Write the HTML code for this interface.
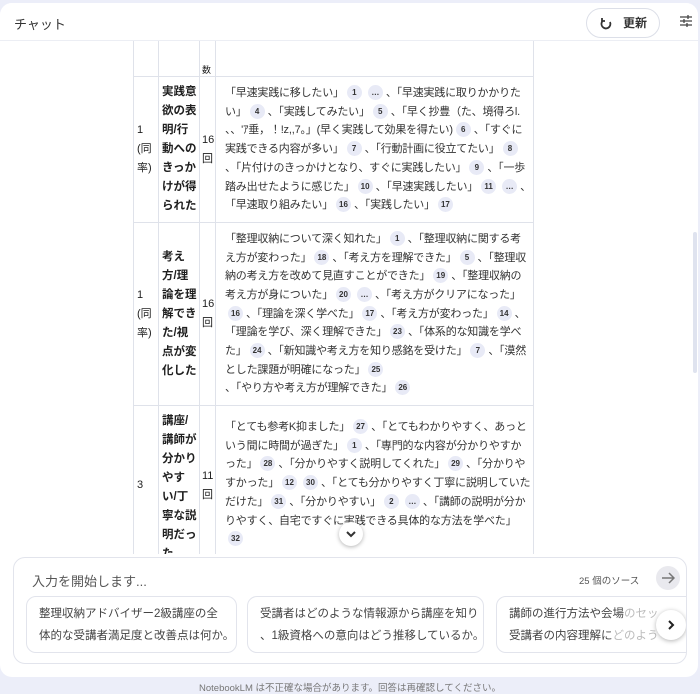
<!DOCTYPE html>
<html><head><meta charset="utf-8"><style>
*{box-sizing:border-box;margin:0;padding:0}
body{width:700px;height:693px;overflow:hidden;background:#eceef9;font-family:"Liberation Sans","Noto Sans CJK JP",sans-serif;color:#1f1f1f;position:relative}
.panel{position:absolute;left:0;top:3px;width:698px;height:674px;background:#fff;border-radius:12px;overflow:hidden}
.hdr{position:absolute;left:0;top:0;width:100%;height:38px;border-bottom:1.5px solid #eceef4}
.hdr .t{position:absolute;left:14px;top:11px;font-size:13px;color:#333}
.btn{position:absolute;left:586px;top:5px;width:74px;height:30px;border:1px solid #dcdfe8;border-radius:16px;font-size:12px;font-weight:bold;color:#333;line-height:28px;padding-left:36px}
.btn svg{position:absolute;left:12px;top:8px}
.tune{position:absolute;left:680px;top:12px}
.clip{position:absolute;left:0;top:0;width:100%;height:551px;overflow:hidden}
table{position:absolute;left:133px;top:20px;border-collapse:collapse;font-size:11px;table-layout:fixed}
td{border:1px solid #dfe2ea;vertical-align:middle;line-height:18.7px}
td.c1{width:25px;padding-left:3px;font-size:11px;line-height:19px}
td.c2{width:41px;padding-left:3px;font-weight:bold;font-size:11.5px;line-height:19px}
td.c3{width:16px;padding-left:2px;font-size:11px}
td.c4{width:318px;padding:4px 2px 4px 9px;color:#333;letter-spacing:-0.2px}
.ch{display:inline-block;min-width:15px;height:15px;line-height:15px;border-radius:8px;background:#e8eaf6;font-size:8px;text-align:center;padding:0 3px;margin:0 3px;vertical-align:1px;color:#333;font-weight:bold;letter-spacing:0}
.down{position:absolute;left:339px;top:519px;width:24px;height:24px;border-radius:50%;background:#fff;box-shadow:0 1px 4px rgba(0,0,0,.3)}
.down svg{position:absolute;left:6px;top:7px}
.inp{position:absolute;left:13px;top:554px;width:674px;height:107px;border:1px solid #e2e4ec;border-radius:12px;background:#fff;overflow:hidden}
.ph{position:absolute;left:18px;top:13px;font-size:13px;color:#555}
.src{position:absolute;left:565px;top:15px;font-size:9.5px;color:#555}
.go{position:absolute;left:642px;top:8px;width:24px;height:24px;border-radius:50%;background:#e9e9ee}
.go svg{position:absolute;left:5px;top:5px}
.card{position:absolute;top:38px;height:57px;border:1px solid #e2e4ec;border-radius:10px;font-size:11.5px;line-height:22px;padding:6px 12px;color:#444;white-space:nowrap;overflow:hidden}
.next{position:absolute;left:642px;top:52px;width:30px;height:30px;border-radius:50%;background:#fff;box-shadow:0 1px 5px rgba(0,0,0,.3)}
.next svg{position:absolute;left:10px;top:9px}
.foot{position:absolute;left:0;top:680px;width:700px;text-align:center;font-size:9.5px;color:#777}
.sb{position:absolute;left:693px;top:229px;width:4px;height:141px;background:#dfe3ef;border-radius:2px}
</style></head><body>
<div class="panel">
<div class="clip">
<table>
<tr style="height:53px"><td class="c1"></td><td class="c2"></td><td class="c3" style="vertical-align:bottom;font-size:9px;line-height:12px">数</td><td class="c4"></td></tr>
<tr style="height:146px"><td class="c1">1<br>(同<br>率)</td><td class="c2">実践意<br>欲の表<br>明/行<br>動への<br>きっか<br>けが得<br>られた</td><td class="c3">16<br>回</td><td class="c4">「早速実践に移したい」<span class="ch">1</span><span class="ch">…</span>、「早速実践に取りかかりたい」<span class="ch">4</span>、「実践してみたい」<span class="ch">5</span>、「早く抄豊（た、境得ろl. 、、'ｱ垂，！!z,,7。」(早く実践して効果を得たい)<span class="ch">6</span>、「すぐに実践できる内容が多い」<span class="ch">7</span>、「行動計画に役立てたい」<span class="ch">8</span>、「片付けのきっかけとなり、すぐに実践したい」<span class="ch">9</span>、「一歩踏み出せたように感じた」<span class="ch">10</span>、「早速実践したい」<span class="ch">11</span><span class="ch">…</span>、「早速取り組みたい」<span class="ch">16</span>、「実践したい」<span class="ch">17</span></td></tr>
<tr style="height:183px"><td class="c1">1<br>(同<br>率)</td><td class="c2">考え<br>方/理<br>論を理<br>解でき<br>た/視<br>点が変<br>化した</td><td class="c3">16<br>回</td><td class="c4">「整理収納について深く知れた」<span class="ch">1</span>、「整理収納に関する考え方が変わった」<span class="ch">18</span>、「考え方を理解できた」<span class="ch">5</span>、「整理収納の考え方を改めて見直すことができた」<span class="ch">19</span>、「整理収納の考え方が身についた」<span class="ch">20</span><span class="ch">…</span>、「考え方がクリアになった」<span class="ch">16</span>、「理論を深く学べた」<span class="ch">17</span>、「考え方が変わった」<span class="ch">14</span>、「理論を学び、深く理解できた」<span class="ch">23</span>、「体系的な知識を学べた」<span class="ch">24</span>、「新知識や考え方を知り感銘を受けた」<span class="ch">7</span>、「漠然とした課題が明確になった」<span class="ch">25</span><br>、「やり方や考え方が理解できた」<span class="ch">26</span></td></tr>
<tr style="height:160px"><td class="c1">3</td><td class="c2" style="vertical-align:top;padding-top:6px">講座/<br>講師が<br>分かり<br>やす<br>い/丁<br>寧な説<br>明だっ<br>た</td><td class="c3">11<br>回</td><td class="c4" style="vertical-align:top;padding-top:12px">「とても参考K抑ました」<span class="ch">27</span>、「とてもわかりやすく、あっという間に時間が過ぎた」<span class="ch">1</span>、「専門的な内容が分かりやすかった」<span class="ch">28</span>、「分かりやすく説明してくれた」<span class="ch">29</span>、「分かりやすかった」<span class="ch">12</span><span class="ch">30</span>、「とても分かりやすく丁寧に説明していただけた」<span class="ch">31</span>、「分かりやすい」<span class="ch">2</span><span class="ch">…</span>、「講師の説明が分かりやすく、自宅ですぐに実践できる具体的な方法を学べた」<span class="ch">32</span></td></tr>
</table>
</div>
<div class="hdr" style="background:#fff"><span class="t">チャット</span>
<div class="btn"><svg width="14" height="14" viewBox="0 0 14 14" fill="none" stroke="#333" stroke-width="1.8"><path d="M4 3.5A4.5 4.5 0 1 0 11 5M3 1v3h3"/></svg>更新</div>
<svg class="tune" width="12" height="12" viewBox="0 0 12 12" stroke="#444" stroke-width="1.3"><path d="M0 2h12M0 6h12M0 10h12M8 0v4M4 4v4M7 8v4"/></svg></div>
<div class="down"><svg width="12" height="10" viewBox="0 0 12 10" fill="none" stroke="#333" stroke-width="2"><path d="M2 3l4 4 4-4"/></svg></div>
<div class="inp">
<span class="ph">入力を開始します...</span>
<span class="src">25 個のソース</span>
<div class="go"><svg width="14" height="14" viewBox="0 0 14 14" fill="none" stroke="#777" stroke-width="1.5"><path d="M1 7h12M8 2l5 5-5 5"/></svg></div>
<div class="card" style="left:12px;width:211px">整理収納アドバイザー2級講座の全<br>体的な受講者満足度と改善点は何か。</div>
<div class="card" style="left:233px;width:237px">受講者はどのような情報源から講座を知り<br>、1級資格への意向はどう推移しているか。</div>
<div class="card" style="left:482px;width:200px">講師の進行方法や会場<span style="color:#bbb">のセッ</span><br>受講者の内容理解に<span style="color:#bbb">どのよう</span></div>
<div class="next"><svg width="10" height="12" viewBox="0 0 10 12" fill="none" stroke="#222" stroke-width="2"><path d="M3 2l4 4-4 4"/></svg></div>
</div>
<div class="sb"></div>
</div>
<div class="foot">NotebookLM は不正確な場合があります。回答は再確認してください。</div>
</body></html>
